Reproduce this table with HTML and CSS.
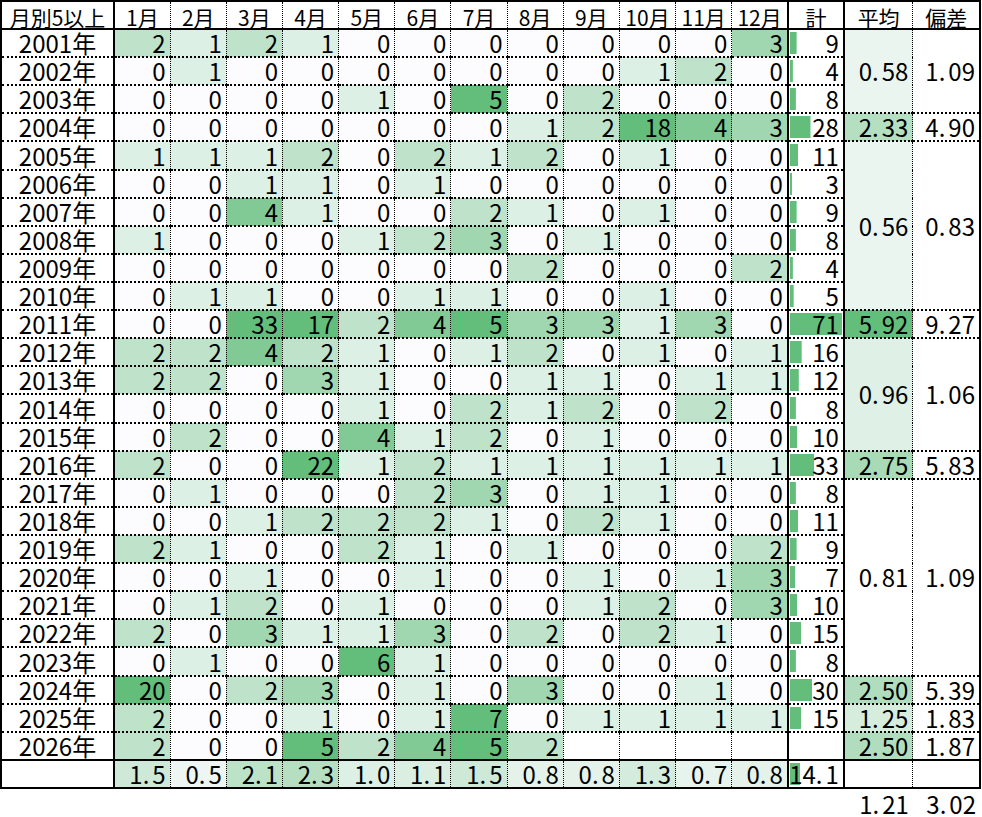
FILE: index.html
```html
<!DOCTYPE html>
<html lang="ja">
<head>
<meta charset="utf-8">
<title>月別5以上</title>
<link rel="stylesheet" href="styles.css">
</head>
<body>
<table class="sheet">
<colgroup>
<col class="c-year">
<col class="c-m"><col class="c-m"><col class="c-m"><col class="c-m"><col class="c-m"><col class="c-m">
<col class="c-m"><col class="c-m"><col class="c-m"><col class="c-m"><col class="c-m"><col class="c-m">
<col class="c-tot"><col class="c-avg"><col class="c-dev">
</colgroup>
<thead>
<tr class="hd"><th class="yr">月別5以上</th><th>1月</th><th>2月</th><th>3月</th><th>4月</th><th>5月</th><th>6月</th><th>7月</th><th>8月</th><th>9月</th><th>10月</th><th>11月</th><th class="m12">12月</th><th class="tot">計</th><th class="avg">平均</th><th class="dev">偏差</th></tr>
</thead>
<tbody>
<tr><td class="yr">2001年</td><td class="v2">2</td><td class="v1">1</td><td class="v2">2</td><td class="v1">1</td><td class="v0">0</td><td class="v0">0</td><td class="v0">0</td><td class="v0">0</td><td class="v0">0</td><td class="v0">0</td><td class="v0">0</td><td class="v3 m12">3</td><td class="tot bar" style="--w:6.6px">9</td><td class="avg mid" rowspan="3" style="background:#eaf5f0">0<span class="dp">.</span>58</td><td class="dev mid" rowspan="3">1<span class="dp">.</span>09</td></tr>
<tr><td class="yr">2002年</td><td class="v0">0</td><td class="v1">1</td><td class="v0">0</td><td class="v0">0</td><td class="v0">0</td><td class="v0">0</td><td class="v0">0</td><td class="v0">0</td><td class="v0">0</td><td class="v1">1</td><td class="v2">2</td><td class="v0 m12">0</td><td class="tot bar" style="--w:2.9px">4</td></tr>
<tr><td class="yr">2003年</td><td class="v0">0</td><td class="v0">0</td><td class="v0">0</td><td class="v0">0</td><td class="v1">1</td><td class="v0">0</td><td class="v5">5</td><td class="v0">0</td><td class="v2">2</td><td class="v0">0</td><td class="v0">0</td><td class="v0 m12">0</td><td class="tot bar" style="--w:5.9px">8</td></tr>
<tr><td class="yr">2004年</td><td class="v0">0</td><td class="v0">0</td><td class="v0">0</td><td class="v0">0</td><td class="v0">0</td><td class="v0">0</td><td class="v0">0</td><td class="v1">1</td><td class="v2">2</td><td class="v5">18</td><td class="v4">4</td><td class="v3 m12">3</td><td class="tot bar" style="--w:20.5px">28</td><td class="avg" style="background:#b5dfc1">2<span class="dp">.</span>33</td><td class="dev">4<span class="dp">.</span>90</td></tr>
<tr><td class="yr">2005年</td><td class="v1">1</td><td class="v1">1</td><td class="v1">1</td><td class="v2">2</td><td class="v0">0</td><td class="v2">2</td><td class="v1">1</td><td class="v2">2</td><td class="v0">0</td><td class="v1">1</td><td class="v0">0</td><td class="v0 m12">0</td><td class="tot bar" style="--w:8.1px">11</td><td class="avg mid" rowspan="6" style="background:#ebf5f0">0<span class="dp">.</span>56</td><td class="dev mid" rowspan="6">0<span class="dp">.</span>83</td></tr>
<tr><td class="yr">2006年</td><td class="v0">0</td><td class="v0">0</td><td class="v1">1</td><td class="v1">1</td><td class="v0">0</td><td class="v1">1</td><td class="v0">0</td><td class="v0">0</td><td class="v0">0</td><td class="v0">0</td><td class="v0">0</td><td class="v0 m12">0</td><td class="tot bar" style="--w:2.2px">3</td></tr>
<tr><td class="yr">2007年</td><td class="v0">0</td><td class="v0">0</td><td class="v4">4</td><td class="v1">1</td><td class="v0">0</td><td class="v0">0</td><td class="v2">2</td><td class="v1">1</td><td class="v0">0</td><td class="v1">1</td><td class="v0">0</td><td class="v0 m12">0</td><td class="tot bar" style="--w:6.6px">9</td></tr>
<tr><td class="yr">2008年</td><td class="v1">1</td><td class="v0">0</td><td class="v0">0</td><td class="v0">0</td><td class="v1">1</td><td class="v2">2</td><td class="v3">3</td><td class="v0">0</td><td class="v1">1</td><td class="v0">0</td><td class="v0">0</td><td class="v0 m12">0</td><td class="tot bar" style="--w:5.9px">8</td></tr>
<tr><td class="yr">2009年</td><td class="v0">0</td><td class="v0">0</td><td class="v0">0</td><td class="v0">0</td><td class="v0">0</td><td class="v0">0</td><td class="v0">0</td><td class="v2">2</td><td class="v0">0</td><td class="v0">0</td><td class="v0">0</td><td class="v2 m12">2</td><td class="tot bar" style="--w:2.9px">4</td></tr>
<tr><td class="yr">2010年</td><td class="v0">0</td><td class="v1">1</td><td class="v1">1</td><td class="v0">0</td><td class="v0">0</td><td class="v1">1</td><td class="v1">1</td><td class="v0">0</td><td class="v0">0</td><td class="v1">1</td><td class="v0">0</td><td class="v0 m12">0</td><td class="tot bar" style="--w:3.7px">5</td></tr>
<tr><td class="yr">2011年</td><td class="v0">0</td><td class="v0">0</td><td class="v5">33</td><td class="v5">17</td><td class="v2">2</td><td class="v4">4</td><td class="v5">5</td><td class="v3">3</td><td class="v3">3</td><td class="v1">1</td><td class="v3">3</td><td class="v0 m12">0</td><td class="tot bar" style="--w:52px">71</td><td class="avg" style="background:#63be7b">5<span class="dp">.</span>92</td><td class="dev">9<span class="dp">.</span>27</td></tr>
<tr><td class="yr">2012年</td><td class="v2">2</td><td class="v2">2</td><td class="v4">4</td><td class="v2">2</td><td class="v1">1</td><td class="v0">0</td><td class="v1">1</td><td class="v2">2</td><td class="v0">0</td><td class="v1">1</td><td class="v0">0</td><td class="v1 m12">1</td><td class="tot bar" style="--w:11.7px">16</td><td class="avg mid" rowspan="4" style="background:#dff0e6">0<span class="dp">.</span>96</td><td class="dev mid" rowspan="4">1<span class="dp">.</span>06</td></tr>
<tr><td class="yr">2013年</td><td class="v2">2</td><td class="v2">2</td><td class="v0">0</td><td class="v3">3</td><td class="v1">1</td><td class="v0">0</td><td class="v0">0</td><td class="v1">1</td><td class="v1">1</td><td class="v0">0</td><td class="v1">1</td><td class="v1 m12">1</td><td class="tot bar" style="--w:8.8px">12</td></tr>
<tr><td class="yr">2014年</td><td class="v0">0</td><td class="v0">0</td><td class="v0">0</td><td class="v0">0</td><td class="v1">1</td><td class="v0">0</td><td class="v2">2</td><td class="v1">1</td><td class="v2">2</td><td class="v0">0</td><td class="v2">2</td><td class="v0 m12">0</td><td class="tot bar" style="--w:5.9px">8</td></tr>
<tr><td class="yr">2015年</td><td class="v0">0</td><td class="v2">2</td><td class="v0">0</td><td class="v0">0</td><td class="v4">4</td><td class="v1">1</td><td class="v2">2</td><td class="v0">0</td><td class="v1">1</td><td class="v0">0</td><td class="v0">0</td><td class="v0 m12">0</td><td class="tot bar" style="--w:7.3px">10</td></tr>
<tr><td class="yr">2016年</td><td class="v2">2</td><td class="v0">0</td><td class="v0">0</td><td class="v5">22</td><td class="v1">1</td><td class="v2">2</td><td class="v1">1</td><td class="v1">1</td><td class="v1">1</td><td class="v1">1</td><td class="v1">1</td><td class="v1 m12">1</td><td class="tot bar" style="--w:24.2px">33</td><td class="avg" style="background:#a8dab6">2<span class="dp">.</span>75</td><td class="dev">5<span class="dp">.</span>83</td></tr>
<tr><td class="yr">2017年</td><td class="v0">0</td><td class="v1">1</td><td class="v0">0</td><td class="v0">0</td><td class="v0">0</td><td class="v2">2</td><td class="v3">3</td><td class="v0">0</td><td class="v1">1</td><td class="v1">1</td><td class="v0">0</td><td class="v0 m12">0</td><td class="tot bar" style="--w:5.9px">8</td><td class="avg mid" rowspan="7">0<span class="dp">.</span>81</td><td class="dev mid" rowspan="7">1<span class="dp">.</span>09</td></tr>
<tr><td class="yr">2018年</td><td class="v0">0</td><td class="v0">0</td><td class="v1">1</td><td class="v2">2</td><td class="v2">2</td><td class="v2">2</td><td class="v1">1</td><td class="v0">0</td><td class="v2">2</td><td class="v1">1</td><td class="v0">0</td><td class="v0 m12">0</td><td class="tot bar" style="--w:8.1px">11</td></tr>
<tr><td class="yr">2019年</td><td class="v2">2</td><td class="v1">1</td><td class="v0">0</td><td class="v0">0</td><td class="v2">2</td><td class="v1">1</td><td class="v0">0</td><td class="v1">1</td><td class="v0">0</td><td class="v0">0</td><td class="v0">0</td><td class="v2 m12">2</td><td class="tot bar" style="--w:6.6px">9</td></tr>
<tr><td class="yr">2020年</td><td class="v0">0</td><td class="v0">0</td><td class="v1">1</td><td class="v0">0</td><td class="v0">0</td><td class="v1">1</td><td class="v0">0</td><td class="v0">0</td><td class="v1">1</td><td class="v0">0</td><td class="v1">1</td><td class="v3 m12">3</td><td class="tot bar" style="--w:5.1px">7</td></tr>
<tr><td class="yr">2021年</td><td class="v0">0</td><td class="v1">1</td><td class="v2">2</td><td class="v0">0</td><td class="v1">1</td><td class="v0">0</td><td class="v0">0</td><td class="v0">0</td><td class="v1">1</td><td class="v2">2</td><td class="v0">0</td><td class="v3 m12">3</td><td class="tot bar" style="--w:7.3px">10</td></tr>
<tr><td class="yr">2022年</td><td class="v2">2</td><td class="v0">0</td><td class="v3">3</td><td class="v1">1</td><td class="v1">1</td><td class="v3">3</td><td class="v0">0</td><td class="v2">2</td><td class="v0">0</td><td class="v2">2</td><td class="v1">1</td><td class="v0 m12">0</td><td class="tot bar" style="--w:11px">15</td></tr>
<tr><td class="yr">2023年</td><td class="v0">0</td><td class="v1">1</td><td class="v0">0</td><td class="v0">0</td><td class="v5">6</td><td class="v1">1</td><td class="v0">0</td><td class="v0">0</td><td class="v0">0</td><td class="v0">0</td><td class="v0">0</td><td class="v0 m12">0</td><td class="tot bar" style="--w:5.9px">8</td></tr>
<tr><td class="yr">2024年</td><td class="v5">20</td><td class="v0">0</td><td class="v2">2</td><td class="v3">3</td><td class="v0">0</td><td class="v1">1</td><td class="v0">0</td><td class="v3">3</td><td class="v0">0</td><td class="v0">0</td><td class="v1">1</td><td class="v0 m12">0</td><td class="tot bar" style="--w:22px">30</td><td class="avg" style="background:#b0ddbd">2<span class="dp">.</span>50</td><td class="dev">5<span class="dp">.</span>39</td></tr>
<tr><td class="yr">2025年</td><td class="v2">2</td><td class="v0">0</td><td class="v0">0</td><td class="v1">1</td><td class="v0">0</td><td class="v1">1</td><td class="v5">7</td><td class="v0">0</td><td class="v1">1</td><td class="v1">1</td><td class="v1">1</td><td class="v1 m12">1</td><td class="tot bar" style="--w:11px">15</td><td class="avg" style="background:#d6edde">1<span class="dp">.</span>25</td><td class="dev">1<span class="dp">.</span>83</td></tr>
<tr><td class="yr">2026年</td><td class="v2">2</td><td class="v0">0</td><td class="v0">0</td><td class="v5">5</td><td class="v2">2</td><td class="v4">4</td><td class="v5">5</td><td class="v2">2</td><td></td><td></td><td></td><td class="m12"></td><td class="tot"></td><td class="avg" style="background:#b0ddbd">2<span class="dp">.</span>50</td><td class="dev">1<span class="dp">.</span>87</td></tr>
<tr class="sum"><td class="yr"></td><td style="background:#cee9d7">1<span class="dp">.</span>5</td><td style="background:#edf6f2">0<span class="dp">.</span>5</td><td style="background:#bce2c8">2<span class="dp">.</span>1</td><td style="background:#b6dfc2">2<span class="dp">.</span>3</td><td style="background:#ddf0e5">1<span class="dp">.</span>0</td><td style="background:#daeee2">1<span class="dp">.</span>1</td><td style="background:#cee9d7">1<span class="dp">.</span>5</td><td style="background:#e4f2ea">0<span class="dp">.</span>8</td><td style="background:#e4f2ea">0<span class="dp">.</span>8</td><td style="background:#d4ecdd">1<span class="dp">.</span>3</td><td style="background:#e7f3ed">0<span class="dp">.</span>7</td><td class="m12" style="background:#e4f2ea">0<span class="dp">.</span>8</td><td class="tot bar" style="--w:10.3px">14<span class="dp">.</span>1</td><td class="avg"></td><td class="dev"></td></tr>
<tr class="foot"><td colspan="14"></td><td>1<span class="dp">.</span>21</td><td>3<span class="dp">.</span>02</td></tr>
</tbody>
</table>
</body>
</html>
```

FILE: styles.css
```css
html, body {
  margin: 0;
  padding: 0;
  background: #ffffff;
}

body {
  font-family: "Noto Sans CJK JP", sans-serif;
  color: #000000;
}

.sheet {
  border-collapse: collapse;
  table-layout: fixed;
  width: 981px;
  margin: 0;
}

.c-year { width: 113px; }
.c-m { width: 56.17px; }
.c-tot { width: 56px; }
.c-avg { width: 69px; }
.c-dev { width: 67px; }

.sheet th,
.sheet td {
  padding: 0 4px 0 0;
  font-size: 24px;
  font-weight: normal;
  line-height: 26px;
  text-align: right;
  vertical-align: bottom;
  white-space: nowrap;
  overflow: visible;
  border-left: 1px dotted #000000;
  border-right: 1px dotted #000000;
  border-top: 2px dotted #000000;
  border-bottom: 2px dotted #000000;
  background: #ffffff;
}

.sheet tr { height: 28px; }
.sheet tbody tr { height: 28.12px; }

.dp { padding-right: 3px; }

/* header */
.hd th {
  font-size: 21px;
  line-height: 22px;
  text-align: center;
  padding: 0;
  border-top: 2px solid #000000;
  border-bottom: 2px solid #000000;
}

/* structural thick lines */
.sheet .yr {
  text-align: center;
  padding: 0;
  border-left: 2px solid #000000;
  border-right: 2px solid #000000;
}
.sheet .m12 { border-right: 2px solid #000000; }
.sheet .tot {
  border-left: 2px solid #000000;
  border-right: 2px solid #000000;
}
.sheet .avg { border-left: 2px solid #000000; }
.sheet .dev { border-right: 2px solid #000000; }
.sheet .mid { vertical-align: middle; }

/* summary row */
.sum td {
  border-top: 2px solid #000000;
  border-bottom: 2px solid #000000;
}

/* footer row without grid */
.sheet .foot { height: 29px; }
.sheet .foot td {
  border: none;
  background: transparent;
}

/* colour scale: white -> green, capped at 5 */
.sheet .v0 { background: #fcfcff; }
.sheet .v1 { background: #ddf0e5; }
.sheet .v2 { background: #bfe3ca; }
.sheet .v3 { background: #a0d7b0; }
.sheet .v4 { background: #82ca95; }
.sheet .v5 { background: #63be7b; }

/* data bar in the total column */
.sheet .bar {
  background-color: #ffffff;
  background-image: linear-gradient(#63be7b, #63be7b);
  background-repeat: no-repeat;
  background-position: 1px 2px;
  background-size: var(--w) 22px;
}
```
